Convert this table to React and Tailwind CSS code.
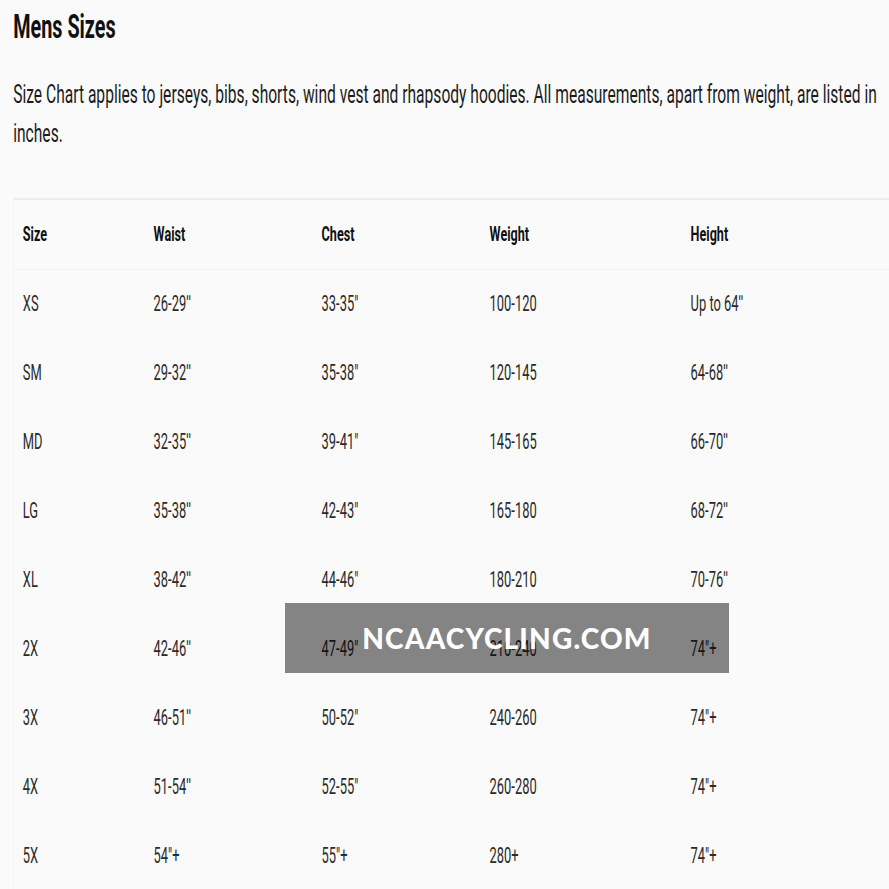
export default function App() {
  const rows = [
    ["XS", "26-29\u02BA", "33-35\u2033", "100-120", "Up to 64\u02BA"],
    ["SM", "29-32\u02BA", "35-38\u2033", "120-145", "64-68\u02BA"],
    ["MD", "32-35\u02BA", "39-41\u2033", "145-165", "66-70\u02BA"],
    ["LG", "35-38\u02BA", "42-43\u2033", "165-180", "68-72\u02BA"],
    ["XL", "38-42\u02BA", "44-46\u2033", "180-210", "70-76\u02BA"],
    ["2X", "42-46\u02BA", "47-49\u2033", "210-240", "74\u2033+"],
    ["3X", "46-51\u02BA", "50-52\u2033", "240-260", "74\u2033+"],
    ["4X", "51-54\u02BA", "52-55\u2033", "260-280", "74\u2033+"],
    ["5X", "54\u2033+", "55\u2033+", "280+", "74\u2033+"],
  ];
  const head = ["Size", "Waist", "Chest", "Weight", "Height"];
  const cols = "grid grid-cols-[218px_280px_280px_335px_1fr]";
  return (
    <div className="relative w-[889px] h-[889px] overflow-hidden bg-[#fafafa]">
      <div
        className="w-[1482px] origin-top-left scale-x-[0.6] pl-[22px] pt-[11px] text-[#222]"
        style={{ fontFamily: "Roboto, 'Liberation Sans', sans-serif" }}
      >
        <h1 className="text-[33px] leading-[32px] font-bold text-[#111]">Mens Sizes</h1>
        <p className="mt-[32px] text-[26px] leading-[39px] text-[#1c1c1c]">
          Size Chart applies to jerseys, bibs, shorts, wind vest and rhapsody hoodies. All measurements, apart from weight, are listed in inches.
        </p>
        <div className="mt-[45px] border-t-2 border-l border-t-[#ececec] border-l-[#f2f2f2]">
          <div className={`${cols} h-[70px] items-center border-b border-[#f1f1f1] text-[21px] font-bold text-[#111]`}>
            {head.map((h) => (
              <div key={h} className="pl-[15px]">{h}</div>
            ))}
          </div>
          {rows.map((r) => (
            <div key={r[0]} className={`${cols} h-[69px] items-center text-[21.5px] text-[#2a2a2a]`}>
              {r.map((c, i) => (
                <div key={i} className="pl-[15px]">{c}</div>
              ))}
            </div>
          ))}
        </div>
      </div>
      <div className="absolute left-[285px] top-[603px] w-[444px] h-[70px] bg-[rgba(0,0,0,0.47)] flex items-center justify-center">
        <span
          className="text-white text-[28px] font-black tracking-[1.2px]"
          style={{ fontFamily: "Lato, 'Open Sans', sans-serif" }}
        >
          NCAACYCLING.COM
        </span>
      </div>
    </div>
  );
}
